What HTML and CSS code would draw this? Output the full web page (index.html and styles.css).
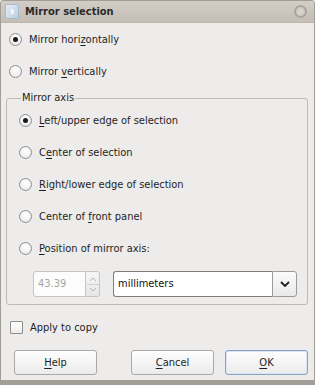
FILE: index.html
```html
<!DOCTYPE html>
<html lang="en">
<head>
    <meta charset="UTF-8">
    <title>Mirror selection</title>
    <link rel="stylesheet" href="styles.css">
</head>
<body>
    <div class="window">
        <div class="titlebar">
            <svg class="app-icon" width="14" height="15" viewBox="0 0 14 15">
                <defs>
                    <linearGradient id="doc" x1="0" y1="0" x2="1" y2="1">
                        <stop offset="0" stop-color="#e6eef6"/>
                        <stop offset="1" stop-color="#b9cde0"/>
                    </linearGradient>
                </defs>
                <rect x="0.5" y="0.5" width="13" height="14" rx="1.5" fill="url(#doc)" stroke="#a9bccf"/>
                <path d="M5 4 h1.5 a3 3.5 0 0 1 0 7 h-1.5 z" fill="#f3f7fb" stroke="#c9d8e6"/>
            </svg>
            <span class="title">Mirror selection</span>
            <span class="close"></span>
        </div>

        <div class="content">
            <label class="option">
                <span class="radio checked"></span>
                <span>Mirror hori<u>z</u>ontally</span>
            </label>
            <label class="option">
                <span class="radio"></span>
                <span>Mirror <u>v</u>ertically</span>
            </label>

            <fieldset class="axis">
                <legend>Mirror axis</legend>
                <label class="option">
                    <span class="radio checked"></span>
                    <span><u>L</u>eft/upper edge of selection</span>
                </label>
                <label class="option">
                    <span class="radio"></span>
                    <span>C<u>e</u>nter of selection</span>
                </label>
                <label class="option">
                    <span class="radio"></span>
                    <span><u>R</u>ight/lower edge of selection</span>
                </label>
                <label class="option">
                    <span class="radio"></span>
                    <span>Center of <u>f</u>ront panel</span>
                </label>
                <label class="option">
                    <span class="radio"></span>
                    <span><u>P</u>osition of mirror axis:</span>
                </label>
                <div class="position-row">
                    <div class="spin">
                        <span class="spin-value">43.39</span>
                        <span class="spin-arrows">
                            <svg width="12" height="24" viewBox="0 0 12 24">
                                <path d="M3 9 L6 6 L9 9" fill="none" stroke="#b4b4b4" stroke-width="1"/>
                                <line x1="0" y1="12.5" x2="12" y2="12.5" stroke="#d2d2d2"/>
                                <path d="M3 16 L6 19 L9 16" fill="none" stroke="#b4b4b4" stroke-width="1"/>
                            </svg>
                        </span>
                    </div>
                    <div class="combo">
                        <span class="combo-text">millimeters</span>
                        <span class="combo-button">
                            <svg width="10" height="6" viewBox="0 0 10 6">
                                <path d="M1 1 L5 5 L9 1" fill="none" stroke="#222" stroke-width="1.8"/>
                            </svg>
                        </span>
                    </div>
                </div>
            </fieldset>

            <label class="option copy">
                <span class="checkbox"></span>
                <span>Apply to copy</span>
            </label>

            <div class="buttons">
                <button class="btn"><u>H</u>elp</button>
                <span class="spacer"></span>
                <button class="btn"><u>C</u>ancel</button>
                <button class="btn default"><u>O</u>K</button>
            </div>
        </div>
    </div>
</body>
</html>
```

FILE: styles.css
```css
body {
    margin: 0;
    padding: 0;
    background: #edecea;
    font-family: "DejaVu Sans Condensed", "DejaVu Sans", sans-serif;
    font-size: 11px;
    color: #1e1e1e;
}
.window {
    width: 315px;
    height: 385px;
    box-sizing: border-box;
    border: 1px solid #a19d97;
    border-bottom: 5px solid #a19d97;
    border-radius: 4px 4px 0 0;
    background: #edecea;
    display: flex;
    flex-direction: column;
    overflow: hidden;
}
.titlebar {
    height: 21px;
    display: flex;
    align-items: center;
    padding: 0 7px 0 4px;
    background: linear-gradient(#d2cdc6, #c4beb5);
    border-bottom: 1px solid #bdb7ae;
}
.app-icon {
    flex: none;
}
.title {
    margin-left: 6px;
    font-weight: bold;
    font-size: 11px;
    color: #2b2b2b;
    flex: 1;
}
.close {
    width: 9px;
    height: 9px;
    border-radius: 50%;
    border: 2px solid #aaa69f;
    background: radial-gradient(#dcd8d2, #c6c1b9);
}
.content {
    display: flex;
    flex-direction: column;
    padding: 0 6px 0 5px;
}
.option {
    height: 32px;
    display: flex;
    align-items: center;
    gap: 7px;
    padding-left: 3px;
}
.radio {
    width: 11px;
    height: 11px;
    border-radius: 50%;
    border: 1px solid #8e8e8e;
    background: radial-gradient(circle at 50% 35%, #ffffff, #e6e6e6);
    display: flex;
    align-items: center;
    justify-content: center;
    flex: none;
}
.radio.checked::after {
    content: "";
    width: 5px;
    height: 5px;
    border-radius: 50%;
    background: #1a1a1a;
}
u {
    text-decoration: underline;
    text-underline-offset: 2px;
}
.axis {
    margin: 5px 0 0 0;
    padding: 0 10px 7px 12px;
    border: 1px solid #bdbbb8;
    border-radius: 3px;
    min-width: 0;
}
.axis legend {
    padding: 0 1px;
    margin-left: 2px;
    line-height: 12px;
}
.axis .option {
    padding-left: 0;
}
.position-row {
    margin-top: 7px;
    height: 26px;
    display: flex;
    padding-left: 14px;
    gap: 13px;
}
.spin {
    display: flex;
    height: 26px;
}
.spin-value {
    box-sizing: border-box;
    border: 1px solid #c6c6c6;
    border-radius: 3px 0 0 3px;
    background: #fcfcfc;
    color: #a6a6a6;
    padding-left: 4px;
    line-height: 24px;
    width: 53px;
}
.spin-arrows {
    width: 14px;
    box-sizing: border-box;
    border: 1px solid #c6c6c6;
    border-left: none;
    border-radius: 0 3px 3px 0;
    background: linear-gradient(#f6f6f6, #e6e6e6);
    display: flex;
    justify-content: center;
}
.combo {
    display: flex;
    flex: 1;
    height: 26px;
}
.combo-text {
    flex: 1;
    box-sizing: border-box;
    border: 1px solid #7f7f7f;
    border-right: none;
    border-radius: 3px 0 0 3px;
    background: #ffffff;
    padding-left: 4px;
    line-height: 24px;
    color: #111;
}
.combo-button {
    width: 25px;
    box-sizing: border-box;
    border: 1px solid #9a9a9a;
    border-radius: 0 3px 3px 0;
    background: linear-gradient(#fbfbfb, #e9e9e9);
    display: flex;
    align-items: center;
    justify-content: center;
}
.copy {
    margin-top: 10px;
    height: 24px;
    padding-left: 4px;
    gap: 7px;
}
.checkbox {
    width: 11px;
    height: 11px;
    border: 1px solid #8e8e8e;
    border-radius: 1px;
    background: linear-gradient(#ffffff, #ececec);
    flex: none;
}
.buttons {
    margin-top: 11px;
    display: flex;
    gap: 11px;
    padding-left: 8px;
}
.spacer {
    flex: 1;
}
.btn {
    width: 83px;
    height: 25px;
    font-family: inherit;
    font-size: 11px;
    color: #1e1e1e;
    border: 1px solid #a9a9a9;
    border-radius: 3px;
    background: linear-gradient(#fefefe, #ebebeb);
    padding: 0;
}
.btn.default {
    border-color: #86a2c8;
    box-shadow: inset 0 0 0 1px #dbe5f2;
}
```
